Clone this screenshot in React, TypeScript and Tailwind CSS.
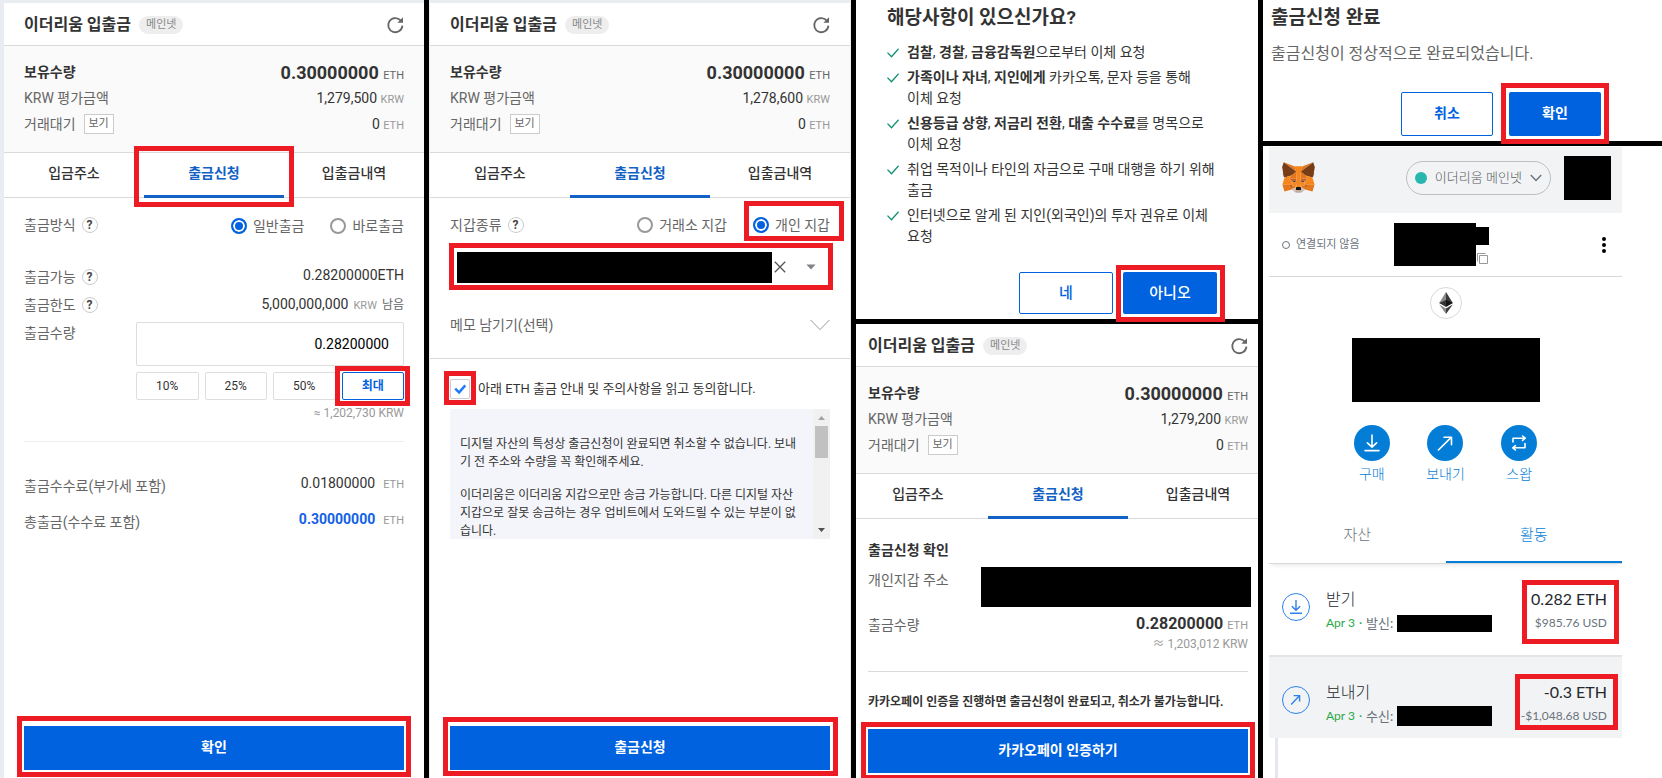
import { Fragment, type ReactNode } from "react";

const SANS = "font-[Roboto,'Noto_Sans_CJK_KR',sans-serif]";

function Mark({ className }: { className: string }) {
  return (
    <span
      aria-hidden="true"
      className={`pointer-events-none absolute z-10 border-5 border-[#ed1c24] ${className}`}
    />
  );
}

function RefreshIcon() {
  return (
    <svg viewBox="0 0 18 18" className="size-[18px]" fill="none">
      <path d="M16.4 9.6A7.1 7.1 0 1 1 14.6 4.4" stroke="#666" strokeWidth="1.8" />
      <path d="M17 1.2v5.6h-5.6z" fill="#666" />
    </svg>
  );
}

function Help({ label }: { label: string }) {
  return (
    <button
      type="button"
      aria-label={label}
      className="ml-[6px] flex size-4 items-center justify-center rounded-full border border-[#ccc] text-[12px] leading-[14px] font-bold text-[#444]"
    >
      ?
    </button>
  );
}

function WalletHead({ krw, mark, className = "px-5" }: { krw: string; mark?: boolean; className?: string }) {
  return (
    <>
      <header className={`flex h-[43px] items-center border-b border-[#d9dadd] pt-[2px] ${className}`}>
        <h2 className="text-[16px] leading-6 font-bold text-[#333]">이더리움 입출금</h2>
        <span className="ml-2 flex h-[18px] items-center rounded-full bg-[#eee] px-[7px] text-[11px] leading-4 text-[#888]">
          메인넷
        </span>
        <button type="button" aria-label="새로고침" className="ml-auto">
          <RefreshIcon />
        </button>
      </header>
      <dl className={`h-[107px] border-b border-[#d9dadd] bg-[#fafafa] pt-[13px] text-[14px] text-[#666] ${className}`}>
        <div className="flex h-[26px] items-center justify-between">
          <dt className="font-bold text-[#333]">보유수량</dt>
          <dd className="text-[18px] font-bold text-[#333]">
            0.30000000 <span className="text-[11px] font-normal text-[#666]">ETH</span>
          </dd>
        </div>
        <div className="flex h-[26px] items-center justify-between">
          <dt>KRW 평가금액</dt>
          <dd className="text-[#333]">
            {krw} <span className="text-[11px] text-[#999]">KRW</span>
          </dd>
        </div>
        <div className="flex h-[26px] items-center justify-between">
          <dt className="flex items-center">
            거래대기
            <button type="button" className="ml-2 h-5 w-[30px] border border-[#ccc] bg-white text-[11px] leading-4">
              보기
            </button>
          </dt>
          <dd className="text-[#333]">
            0 <span className="text-[11px] text-[#999]">ETH</span>
          </dd>
        </div>
      </dl>
      <nav className="flex h-[45px] border-b border-[#d9dadd] text-[14px] font-medium text-[#333]">
        <button type="button" className="flex-1 pb-[3px]">입금주소</button>
        <div className="relative -mb-px flex flex-1">
          <button type="button" className="flex-1 border-b-3 border-[#1261c4] pb-px font-bold text-[#1261c4]">
            출금신청
          </button>
          {mark && <Mark className="-inset-x-[10px] -top-[7px] -bottom-[9px]" />}
        </div>
        <button type="button" className="flex-1 pb-[3px]">입출금내역</button>
      </nav>
    </>
  );
}

function Radio({ name, label, checked, children }: { name: string; label: string; checked?: boolean; children?: ReactNode }) {
  return (
    <label className="relative flex items-center gap-[6px]">
      <input
        type="radio"
        name={name}
        defaultChecked={checked}
        className="size-4 appearance-none rounded-full border-2 border-[#999] bg-white checked:border-[#0062df] checked:bg-[#0062df] checked:shadow-[inset_0_0_0_2px_white]"
      />
      {label}
      {children}
    </label>
  );
}

function SubmitButton({ label, mark }: { label: string; mark: string }) {
  return (
    <div className="relative">
      <button type="button" className="h-11 w-full bg-[#0062df] pb-[2px] text-[14px] leading-5 font-bold text-white">
        {label}
      </button>
      <Mark className={mark} />
    </div>
  );
}

function Approx({ value, className }: { value: string; className: string }) {
  return (
    <p className={`text-right text-[12px] text-[#999] ${className}`}>
      <span className="font-['Noto_Sans_CJK_KR',sans-serif]">≈</span> {value} KRW
    </p>
  );
}

function AmountPanel() {
  return (
    <section className="flex min-w-0 flex-col border-t-3 border-l-4 border-[#e9ecf1] bg-white">
      <WalletHead krw="1,279,500" mark />
      <form className="flex flex-1 flex-col px-5 pt-[13px] text-[14px] leading-5 text-[#666]">
        <div className="flex h-7 items-center">
          출금방식
          <Help label="출금방식 도움말" />
          <div className="ml-auto flex gap-[26px] pt-[2px]">
            <Radio name="method" label="일반출금" checked />
            <Radio name="method" label="바로출금" />
          </div>
        </div>
        <div className="mt-6 flex h-7 items-center">
          출금가능
          <Help label="출금가능 도움말" />
          <span className="ml-auto pb-1 text-[#333]">0.28200000ETH</span>
        </div>
        <div className="flex h-7 items-center">
          출금한도
          <Help label="출금한도 도움말" />
          <span className="ml-auto flex items-baseline gap-[5px] text-[12px] text-[#666]">
            <span className="text-[14px] text-[#333]">5,000,000,000</span>
            <span className="text-[11px] text-[#999]">KRW</span>
            <span>남음</span>
          </span>
        </div>
        <div className="mt-[3px] flex items-start justify-between">
          <label htmlFor="amount" className="leading-[22px]">출금수량</label>
          <div className="w-[268px]">
            <input
              id="amount"
              defaultValue="0.28200000"
              className="h-11 w-full rounded-xs border border-[#ddd] px-[14px] text-right text-black"
            />
            <div className="mt-[6px] grid grid-cols-4 gap-[6px] text-[12px]">
              <button type="button" className="h-7 rounded-xs border border-[#ddd] text-[#333]">10%</button>
              <button type="button" className="h-7 rounded-xs border border-[#ddd] text-[#333]">25%</button>
              <button type="button" className="h-7 rounded-xs border border-[#ddd] text-[#333]">50%</button>
              <div className="relative">
                <button type="button" className="h-7 w-full rounded-xs border border-[#0062df] pb-px font-bold text-[#0062df]">
                  최대
                </button>
                <Mark className="-inset-y-[6px] -right-[6px] -left-[7px]" />
              </div>
            </div>
            <p className="mt-1 text-right text-[12px] leading-[18px] text-[#999]">≈ 1,202,730 KRW</p>
          </div>
        </div>
        <hr className="mt-[19px] mb-[26px] border-[#eee]" />
        <div className="flex h-9 items-center justify-between">
          출금수수료(부가세 포함)
          <span className="flex items-baseline gap-2 pb-1 text-[#333]">
            0.01800000 <span className="text-[11px] text-[#999]">ETH</span>
          </span>
        </div>
        <div className="flex h-9 items-center justify-between">
          총출금(수수료 포함)
          <span className="flex items-baseline gap-2 pb-1 font-bold text-[#1261e6]">
            0.30000000 <span className="text-[11px] font-normal text-[#999]">ETH</span>
          </span>
        </div>
        <div className="mt-auto pb-2">
          <SubmitButton label="확인" mark="-inset-x-[7px] -top-[10px] -bottom-[7px]" />
        </div>
      </form>
    </section>
  );
}

function AddressPanel() {
  return (
    <section className="flex min-w-0 flex-col border-x border-t-3 border-[#e9ecf1] bg-white">
      <WalletHead krw="1,278,600" />
      <form className="flex flex-1 flex-col text-[14px] leading-5 text-[#666]">
        <div className="px-5 pt-[13px]">
          <div className="flex h-7 items-center">
            지갑종류
            <Help label="지갑종류 도움말" />
            <div className="ml-auto flex gap-[26px]">
              <Radio name="wallet" label="거래소 지갑" />
              <Radio name="wallet" label="개인 지갑" checked>
                <Mark className="-top-[14px] -right-[14px] -bottom-[6px] -left-[9px]" />
              </Radio>
            </div>
          </div>
          <div className="relative mt-2 flex h-10 items-center pr-3 pl-[7px]">
            <span className="h-[31px] flex-1 bg-black" />
            <button type="button" aria-label="주소 지우기" className="ml-[2px]">
              <svg viewBox="0 0 12 12" className="size-3" fill="none" stroke="#555" strokeWidth="1.3">
                <path d="M.8.8l10.4 10.4M11.2.8L.8 11.2" />
              </svg>
            </button>
            <button type="button" aria-label="주소 목록" className="ml-[18px]">
              <svg viewBox="0 0 14 14" className="size-[14px]" fill="#808388">
                <path d="M2.4 4.6h9.2L7 9.6z" />
              </svg>
            </button>
            <Mark className="-top-1 -right-[3px] -bottom-[3px] -left-px" />
          </div>
        </div>
        <button type="button" className="flex h-[72px] items-center justify-between border-b border-[#d9dadd] px-5 pt-1">
          메모 남기기(선택)
          <svg viewBox="0 0 20 12" className="h-3 w-5" fill="none" stroke="#999">
            <path d="M.4.8L10 10.6 19.6.8" />
          </svg>
        </button>
        <div className="px-5 pt-5">
          <label className="flex items-center gap-2 text-[13px] text-[#333]">
            <span className="relative grid size-5">
              <input
                type="checkbox"
                defaultChecked
                className="size-5 appearance-none rounded-xs border border-[#c8cad8] bg-white [grid-area:1/1]"
              />
              <svg viewBox="0 0 20 20" className="pointer-events-none size-5 [grid-area:1/1]" fill="none" stroke="#1f7aff" strokeWidth="2.4">
                <path d="M5.2 9.6l3.9 3.8 6.2-7" />
              </svg>
              <Mark className="-inset-x-[6px] -top-2 -bottom-[6px]" />
            </span>
            아래 ETH 출금 안내 및 주의사항을 읽고 동의합니다.
          </label>
          <div className="mt-[10px] flex h-[130px] overflow-hidden bg-[#f3f5fa] text-[12px] leading-[18px] text-[#333]">
            <div className="flex-1 px-[10px] pt-[26px] break-all">
              <p>디지털 자산의 특성상 출금신청이 완료되면 취소할 수 없습니다. 보내기 전 주소와 수량을 꼭 확인해주세요.</p>
              <p className="mt-[15px]">
                이더리움은 이더리움 지갑으로만 송금 가능합니다. 다른 디지털 자산 지갑으로 잘못 송금하는 경우 업비트에서 도와드릴 수 있는 부분이 없습니다.
              </p>
            </div>
            <div className="flex w-[17px] flex-col items-center bg-[#f1f1f1]">
              <svg viewBox="0 0 17 17" className="size-[17px]" fill="#a3a3a3">
                <path d="M5 11l3.5-4 3.5 4z" />
              </svg>
              <span className="h-8 w-[13px] bg-[#c1c1c1]" />
              <svg viewBox="0 0 17 17" className="mt-auto size-[17px]" fill="#505050">
                <path d="M5 6l3.5 4L12 6z" />
              </svg>
            </div>
          </div>
        </div>
        <div className="mt-auto px-5 pb-2">
          <SubmitButton label="출금신청" mark="-right-2 -left-[7px] -top-[9px] -bottom-[6px]" />
        </div>
      </form>
    </section>
  );
}

const warnings: { strong?: string[]; text: string }[] = [
  { strong: ["검찰", "경찰", "금융감독원"], text: "으로부터 이체 요청" },
  { strong: ["가족이나 자녀", "지인에게"], text: " 카카오톡, 문자 등을 통해 이체 요청" },
  { strong: ["신용등급 상향", "저금리 전환", "대출 수수료"], text: "를 명목으로 이체 요청" },
  { text: "취업 목적이나 타인의 자금으로 구매 대행을 하기 위해 출금" },
  { text: "인터넷으로 알게 된 지인(외국인)의 투자 권유로 이체 요청" },
];

function WarningDialog() {
  return (
    <section className="flex h-[319px] flex-col bg-white pt-[6px] pr-[41px] pl-[31px]">
      <h2 className="text-[19px] leading-6 font-bold text-[#333]">해당사항이 있으신가요?</h2>
      <ul className="mt-3 flex flex-col gap-1 text-[14px] leading-[21px] break-keep text-[#333]">
        {warnings.map((item) => (
          <li key={item.text} className="flex gap-2">
            <svg viewBox="0 0 12 10" className="mt-[6px] h-[10px] w-3 shrink-0" fill="none" stroke="#0f8f6f" strokeWidth="1.3">
              <path d="M.5 4.6l4 4.2L11.6.8" />
            </svg>
            <p>
              {item.strong?.map((word, i) => (
                <Fragment key={word}>
                  {i > 0 && ", "}
                  <strong>{word}</strong>
                </Fragment>
              ))}
              {item.text}
            </p>
          </li>
        ))}
      </ul>
      <div className="mt-auto mb-[5px] flex justify-end gap-[10px] text-[15px] font-medium">
        <button type="button" className="h-[42px] w-[94px] rounded-xs border border-[#0062df] pt-px text-[#0062df]">네</button>
        <div className="relative">
          <button type="button" className="h-[42px] w-[94px] rounded-xs bg-[#0062df] pt-px text-white">아니오</button>
          <Mark className="-top-[7px] -right-2 -bottom-2 -left-[7px]" />
        </div>
      </div>
    </section>
  );
}

function ConfirmPanel() {
  return (
    <section className="flex-1 overflow-hidden bg-white">
      <div className="-mr-[10px] -ml-2 flex h-full flex-col">
        <WalletHead krw="1,279,200" />
        <div className="flex flex-1 flex-col px-5 pt-5 text-[14px] leading-5 text-[#666]">
          <h3 className="leading-[22px] font-bold text-[#333]">출금신청 확인</h3>
          <div className="mt-[6px] flex items-start justify-between">
            <span className="pt-[3px]">개인지갑 주소</span>
            <span className="-mr-[3px] h-10 w-[270px] bg-black" />
          </div>
          <div className="mt-[6px] flex h-6 items-center justify-between">
            출금수량
            <span className="text-[16px] font-bold text-[#333]">
              0.28200000 <span className="text-[11px] font-normal text-[#999]">ETH</span>
            </span>
          </div>
          <Approx value="1,203,012" className="leading-3" />
          <hr className="mt-[21px] border-[#d9dadd]" />
          <p className="mt-5 text-[12px] font-bold text-[#333]">
            카카오페이 인증을 진행하면 출금신청이 완료되고, 취소가 불가능합니다.
          </p>
          <div className="mt-auto pb-[5px]">
            <SubmitButton label="카카오페이 인증하기" mark="-inset-[7px]" />
          </div>
        </div>
      </div>
    </section>
  );
}

function DoneDialog() {
  return (
    <section className="flex h-[141px] flex-col bg-white pt-[6px] pr-[61px] pl-2">
      <h2 className="text-[19px] leading-6 font-bold text-[#333]">출금신청 완료</h2>
      <p className="mt-3 text-[16px] leading-6 text-[#666]">출금신청이 정상적으로 완료되었습니다.</p>
      <div className="mt-auto mb-[5px] flex justify-end gap-4 text-[14px] font-bold">
        <button type="button" className="h-11 w-[92px] rounded-xs border border-[#0062df] pb-px text-[#0062df]">취소</button>
        <div className="relative">
          <button type="button" className="h-11 w-[92px] rounded-xs bg-[#0062df] pb-px text-white">확인</button>
          <Mark className="-inset-x-2 -top-[9px] -bottom-2" />
        </div>
      </div>
    </section>
  );
}

const foxShapes: [string, string][] = [
  ["#E2761B", "274.1,35.5 174.6,109.4 193,65.8"],
  ["#E4761B", "44.4,35.5 143.1,110.1 125.6,65.8"],
  ["#E4761B", "238.3,206.8 211.8,247.4 268.5,263 284.8,207.7"],
  ["#E4761B", "33.9,207.7 50.1,263 106.8,247.4 80.3,206.8"],
  ["#E4761B", "103.6,138.2 87.8,162.1 144.1,164.6 142.1,104.1"],
  ["#E4761B", "214.9,138.2 175.9,103.4 174.6,164.6 230.8,162.1"],
  ["#E4761B", "106.8,247.4 140.6,230.9 111.4,208.1"],
  ["#E4761B", "177.9,230.9 211.8,247.4 207.1,208.1"],
  ["#D7C1B3", "211.8,247.4 177.9,230.9 180.6,253 180.3,262.3"],
  ["#D7C1B3", "106.8,247.4 138.3,262.3 138.1,253 140.6,230.9"],
  ["#233447", "138.8,193.5 110.6,185.2 130.5,176.1"],
  ["#233447", "179.7,193.5 188,176.1 208,185.2"],
  ["#CD6116", "106.8,247.4 111.6,206.8 80.3,207.7"],
  ["#CD6116", "207,206.8 211.8,247.4 238.3,207.7"],
  ["#CD6116", "230.8,162.1 174.6,164.6 179.8,193.5 188.1,176.1 208.1,185.2"],
  ["#CD6116", "110.6,185.2 130.6,176.1 138.8,193.5 144.1,164.6 87.8,162.1"],
  ["#E4751F", "87.8,162.1 111.4,208.1 110.6,185.2"],
  ["#E4751F", "208.1,185.2 207.1,208.1 230.8,162.1"],
  ["#E4751F", "144.1,164.6 138.8,193.5 145.4,227.6 146.9,182.7"],
  ["#E4751F", "174.6,164.6 171.9,182.6 173.1,227.6 179.8,193.5"],
  ["#F6851B", "179.8,193.5 173.1,227.6 177.9,230.9 207.1,208.1 208.1,185.2"],
  ["#F6851B", "110.6,185.2 111.4,208.1 140.6,230.9 145.4,227.6 138.8,193.5"],
  ["#C0AD9E", "180.3,262.3 180.6,253 178.1,250.8 140.4,250.8 138.1,253 138.3,262.3 106.8,247.4 117.8,256.4 140.1,271.9 178.4,271.9 200.8,256.4 211.8,247.4"],
  ["#161616", "177.9,230.9 173.1,227.6 145.4,227.6 140.6,230.9 138.1,253 140.4,250.8 178.1,250.8 180.6,253"],
  ["#763D16", "278.3,114.2 286.8,73.4 274.1,35.5 177.9,106.9 214.9,138.2 267.2,153.5 278.8,140 273.8,136.4 281.8,129.1 275.6,124.3 283.6,118.2"],
  ["#763D16", "31.8,73.4 40.3,114.2 34.9,118.2 42.9,124.3 36.8,129.1 44.8,136.4 39.8,140 51.3,153.5 103.6,138.2 140.6,106.9 44.4,35.5"],
  ["#F6851B", "267.2,153.5 214.9,138.2 230.8,162.1 207.1,208.1 238.3,207.7 284.8,207.7"],
  ["#F6851B", "103.6,138.2 51.3,153.5 33.9,207.7 80.3,207.7 111.4,208.1 87.8,162.1"],
  ["#F6851B", "174.6,164.6 177.9,106.9 193.1,65.8 125.6,65.8 140.6,106.9 144.1,164.6 145.3,182.8 145.4,227.6 173.1,227.6 173.3,182.8"],
];

function Fox() {
  return (
    <svg viewBox="31 35 257 238" className="h-[31px] w-[33px]">
      {foxShapes.map(([fill, points]) => (
        <polygon key={points} fill={fill} points={points} />
      ))}
    </svg>
  );
}

function Action({ label, children }: { label: string; children: ReactNode }) {
  return (
    <button type="button" className="flex flex-col items-center text-[14px] leading-5 font-light text-[#037dd6]">
      <span className="mb-[3px] flex size-9 items-center justify-center rounded-full bg-[#037dd6]">
        <svg viewBox="0 0 18 18" className="size-[18px]" fill="none" stroke="#fff" strokeWidth="1.6" strokeLinecap="round" strokeLinejoin="round">
          {children}
        </svg>
      </span>
      {label}
    </button>
  );
}

function Activity(props: {
  title: string;
  kind: string;
  eth: string;
  usd: string;
  className: string;
  redaction: string;
  mark: string;
  children: ReactNode;
}) {
  return (
    <li className={`flex items-start pt-[23px] pr-[15px] pl-[13px] ${props.className}`}>
      <svg viewBox="0 0 28 28" className="mt-[6px] size-7 shrink-0" fill="none" stroke="#2f80ed">
        <circle cx="14" cy="14" r="13.5" />
        <g strokeWidth="1.4">{props.children}</g>
      </svg>
      <div className="ml-4 leading-6">
        <h3 className="text-[16px] font-light text-[#24292e]">{props.title}</h3>
        <div className="flex items-center text-[12px] text-[#6a737d]">
          <span className="text-[#28a745]">Apr 3</span>
          <span className="mx-1 text-[#28a745]">·</span>
          <span className="text-[13px] leading-6">{props.kind}:</span>
          <span className={`ml-1 w-[95px] bg-black ${props.redaction}`} />
        </div>
      </div>
      <div className="relative ml-auto text-right leading-6">
        <p className="text-[16px] text-[#24292e]">{props.eth}</p>
        <p className="text-[12px] text-[#6a737d]">{props.usd}</p>
        <Mark className={props.mark} />
      </div>
    </li>
  );
}

function WalletPanel() {
  return (
    <section className="flex flex-1 flex-col bg-white pt-px pr-10 pl-[6px] font-[Lato,'Noto_Sans_CJK_KR',sans-serif]">
      <header className="flex h-[66px] items-center bg-[#f2f3f4] pr-[11px] pb-[5px] pl-[13px]">
        <Fox />
        <button
          type="button"
          className="ml-auto flex h-[34px] items-center rounded-full border border-[#bbc0c5] px-2 text-[13px] font-light text-[#535a61]"
        >
          <span className="mr-2 size-3 rounded-full bg-[#29b6af]" />
          이더리움 메인넷
          <svg viewBox="0 0 12 8" className="ml-2 h-2 w-3" fill="none" stroke="#6a737d" strokeWidth="1.4">
            <path d="M.8 1L6 6.4 11.2 1" />
          </svg>
        </button>
        <span className="ml-[13px] h-11 w-[47px] bg-black" />
      </header>
      <div className="grid h-16 grid-cols-[125px_1fr_auto] items-center border-b border-[#d6d9dc] pr-4 pl-[13px]">
        <span className="flex items-center gap-[6px] text-[11px] text-[#6a737d]">
          <span className="size-2 rounded-full border border-[#6a737d]" />
          연결되지 않음
        </span>
        <span className="-ml-[13px] flex items-start">
          <span className="h-[43px] w-[82px] bg-black" />
          <span className="mt-1 flex flex-col">
            <span className="h-[18px] w-[13px] bg-black" />
            <button type="button" aria-label="주소 복사" className="mt-2 ml-px">
              <svg viewBox="0 0 11 11" className="size-[11px]" fill="none" stroke="#999">
                <path d="M.5 8.5v-8h8M2.5 2.5h8v8h-8z" />
              </svg>
            </button>
          </span>
        </span>
        <button type="button" aria-label="더보기">
          <svg viewBox="0 0 4 16" className="h-4 w-1">
            <circle cx="2" cy="2" r="2" />
            <circle cx="2" cy="8" r="2" />
            <circle cx="2" cy="14" r="2" />
          </svg>
        </button>
      </div>
      <div className="flex flex-col items-center pt-[10px]">
        <svg viewBox="0 0 32 32" className="size-8">
          <circle cx="16" cy="16" r="15.5" fill="#fff" stroke="#d6d9dc" />
          <path d="M16 5v13.9L9.2 16z" fill="#8a8a8a" />
          <path d="M16 5v13.9l6.8-2.9z" fill="#393939" />
          <path d="M16 12.9V20l-6.8-4z" fill="#343434" />
          <path d="M16 12.9V20l6.8-4z" fill="#141414" />
          <path d="M16 21.4v5.6l-6.8-9.6z" fill="#8a8a8a" />
          <path d="M16 21.4v5.6l6.8-9.6z" fill="#3c3c3b" />
        </svg>
        <span className="mt-[19px] h-16 w-[188px] bg-black" />
        <div className="mt-[23px] grid w-[221px] grid-cols-3">
          <Action label="구매">
            <path d="M9 1v12M4.4 8.8L9 13.2l4.6-4.4M2 16.6h14" />
          </Action>
          <Action label="보내기">
            <path d="M2.4 16L15.2 3.4M8 3.2h7.5v7.5" />
          </Action>
          <Action label="스왑">
            <path d="M3 8V4.2h11.5M12.6 2l2.6 2.2-2.6 2.2M15 9.6v4.2H3.5M5.4 11.6l-2.6 2.2L5.4 16" />
          </Action>
        </div>
      </div>
      <nav className="mt-[22px] flex h-[58px] border-b border-[#d6d9dc] text-[15px] font-light shadow-[0_5px_4px_-3px_rgba(0,0,0,0.08)]">
        <button type="button" className="flex-1 border-b-2 border-transparent pt-[2px] text-[#6a737d]">자산</button>
        <button type="button" className="flex-1 border-b-2 border-[#037dd6] pt-[2px] text-[#037dd6]">활동</button>
      </nav>
      <ul>
        <Activity
          title="받기"
          kind="발신"
          eth="0.282 ETH"
          usd="$985.76 USD"
          className="border-b-2 border-[#e2e4e6] pb-5"
          redaction="h-[17px]"
          mark="-top-[7px] -right-3 -bottom-[9px] -left-[9px]"
        >
          <path d="M14 7v10M9.8 13.2l4.2 4 4.2-4M8 20.3h12" />
        </Activity>
        <Activity
          title="보내기"
          kind="수신"
          eth="-0.3 ETH"
          usd="-$1,048.68 USD"
          className="bg-[#f2f3f4] pb-[10px]"
          redaction="h-5"
          mark="-top-[6px] -right-[11px] -bottom-[2px] -left-[6px]"
        >
          <path d="M9.2 18.4l8.2-8.6M11.6 9.6h6v6" />
        </Activity>
      </ul>
      <span className="ml-[6px] w-[3px] flex-1 bg-[#e4e7ee]" />
    </section>
  );
}

export default function App() {
  return (
    <main
      className={`grid min-h-screen grid-cols-[minmax(0,424fr)_minmax(0,422fr)_minmax(0,402fr)_minmax(0,399fr)] gap-[5px] bg-black ${SANS}`}
    >
      <AmountPanel />
      <AddressPanel />
      <div className="flex min-w-0 flex-col gap-[5px]">
        <WarningDialog />
        <ConfirmPanel />
      </div>
      <div className="flex min-w-0 flex-col gap-[5px]">
        <DoneDialog />
        <WalletPanel />
      </div>
    </main>
  );
}
